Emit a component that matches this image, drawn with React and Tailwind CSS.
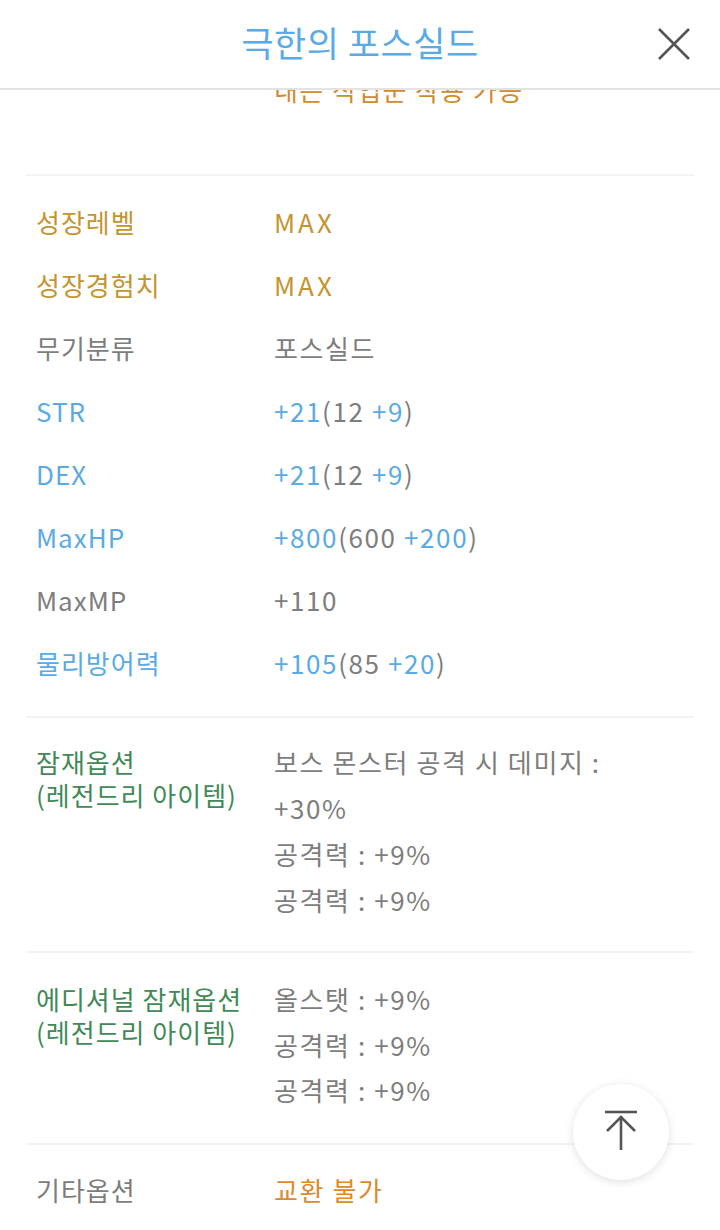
import React from "react";

const FONT = { fontFamily: '"Noto Sans CJK KR", "Noto Sans", sans-serif' };

const GOLD = "text-[#c4952f]";
const BLUE = "text-[#5aaae4]";
const GRAY = "text-[#7d7d7d]";
const GREEN = "text-[#3f8a57]";

function Row({ label, labelClass, children }) {
  return (
    <div className="grid grid-cols-[248px_1fr] h-[63px] items-center">
      <div className={`pl-[10px] tracking-[1px] ${labelClass}`}>{label}</div>
      <div className="tracking-[1.6px]">{children}</div>
    </div>
  );
}

function Stat({ total, base, add }) {
  return (
    <span>
      <span className={BLUE}>{total}</span>
      <span className={GRAY}>({base} </span>
      <span className={BLUE}>{add}</span>
      <span className={GRAY}>)</span>
    </span>
  );
}

function Divider() {
  return <div className="border-t-2 border-[#f3f3f3]" />;
}

export default function App() {
  return (
    <div className="relative w-[720px] h-[1230px] overflow-hidden bg-white text-[26px]" style={FONT}>
      {/* content */}
      <div className="mx-[26px]">
        <div className="grid grid-cols-[248px_1fr] pt-[72px] pb-[66px] leading-[36px]">
          <div />
          <div className="text-[#d08b30] tracking-[1.4px]">내는 직업군 착용 가능</div>
        </div>
        <Divider />
        <div className="pt-[14px] pb-[22px]">
          <Row label="성장레벨" labelClass={GOLD}>
            <span className={`${GOLD} tracking-[3px]`}>MAX</span>
          </Row>
          <Row label="성장경험치" labelClass={GOLD}>
            <span className={`${GOLD} tracking-[3px]`}>MAX</span>
          </Row>
          <Row label="무기분류" labelClass={GRAY}>
            <span className={GRAY}>포스실드</span>
          </Row>
          <Row label="STR" labelClass={BLUE}>
            <Stat total="+21" base="12" add="+9" />
          </Row>
          <Row label="DEX" labelClass={BLUE}>
            <Stat total="+21" base="12" add="+9" />
          </Row>
          <Row label="MaxHP" labelClass={BLUE}>
            <Stat total="+800" base="600" add="+200" />
          </Row>
          <Row label="MaxMP" labelClass={GRAY}>
            <span className={GRAY}>+110</span>
          </Row>
          <Row label="물리방어력" labelClass={BLUE}>
            <Stat total="+105" base="85" add="+20" />
          </Row>
        </div>
        <Divider />
        <div className="grid grid-cols-[248px_1fr] items-start pt-[21px] pb-[28px]">
          <div className={`pl-[10px] pt-[6px] leading-[33px] tracking-[1px] ${GREEN}`}>
            <div>잠재옵션</div>
            <div>(레전드리 아이템)</div>
          </div>
          <div className={`leading-[46px] max-w-[360px] tracking-[1.6px] ${GRAY}`}>
            <div>보스 몬스터 공격 시 데미지 : +30%</div>
            <div>공격력 : +9%</div>
            <div>공격력 : +9%</div>
          </div>
        </div>
        <Divider />
        <div className="grid grid-cols-[248px_1fr] items-start pt-[23px] pb-[30px]">
          <div className={`pl-[10px] pt-[6px] leading-[33px] tracking-[1px] ${GREEN}`}>
            <div>에디셔널 잠재옵션</div>
            <div>(레전드리 아이템)</div>
          </div>
          <div className={`leading-[45.5px] tracking-[1.6px] ${GRAY}`}>
            <div>올스탯 : +9%</div>
            <div>공격력 : +9%</div>
            <div>공격력 : +9%</div>
          </div>
        </div>
        <Divider />
        <div className="pt-[13px]">
          <Row label="기타옵션" labelClass={GRAY}>
            <span className="text-[#dc8a2c]">교환 불가</span>
          </Row>
        </div>
      </div>

      {/* sticky header */}
      <div className="absolute top-0 left-0 right-0 h-[90px] bg-white border-b-2 border-[#e3e3e3] flex items-center justify-center">
        <div className="text-[35px] text-[#5aaae6] tracking-[0.5px] leading-none -mt-[6px]">극한의 포스실드</div>
        <button className="absolute left-[654px] top-[24px] w-[40px] h-[40px] flex items-center justify-center">
          <svg width="36" height="36" viewBox="0 0 36 36" fill="none" stroke="#555" strokeWidth="2.6" strokeLinecap="butt">
            <path d="M3 3 L33 33 M33 3 L3 33" />
          </svg>
        </button>
      </div>

      {/* scroll to top */}
      <button className="absolute left-[573px] top-[1084px] w-[96px] h-[96px] rounded-full bg-white shadow-[0_2px_10px_rgba(0,0,0,0.12)] flex items-center justify-center">
        <svg width="40" height="44" viewBox="0 0 40 44" fill="none" stroke="#555" strokeWidth="2.6">
          <path d="M4 2 H36" />
          <path d="M20 6 V40" />
          <path d="M6 21 L20 7 L34 21" />
        </svg>
      </button>
    </div>
  );
}
